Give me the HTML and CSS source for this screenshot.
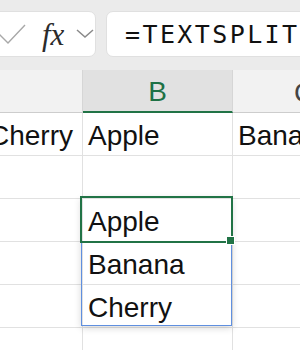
FILE: index.html
```html
<!DOCTYPE html>
<html lang="en">
<head>
    <meta charset="UTF-8" />
    <title>Sheet</title>
    <link rel="stylesheet" href="styles.css">
</head>
<body>
    <div class="toolbar">
        <div class="name-box">
            <svg class="check" width="36" height="24" viewBox="0 0 36 24">
                <polyline points="7,11 17,21 34,3" fill="none" stroke="#a8a8a8" stroke-width="1.4" />
            </svg>
            <span class="fx">fx</span>
            <svg class="chevron" width="18" height="10" viewBox="0 0 18 10">
                <polyline points="1,1 9,8 17,1" fill="none" stroke="#8a8a8a" stroke-width="1.5" />
            </svg>
        </div>
        <div class="formula">=TEXTSPLIT(A1,",")</div>
    </div>

    <div class="sheet">
        <div class="cell head"></div>
        <div class="cell head active-col">B</div>
        <div class="cell head">C</div>

        <div class="cell col-a">Cherry</div>
        <div class="cell">Apple</div>
        <div class="cell">Banana</div>

        <div class="cell"></div>
        <div class="cell"></div>
        <div class="cell"></div>

        <div class="cell"></div>
        <div class="cell current">
            Apple
            <div class="spill"></div>
            <div class="selection"></div>
            <div class="handle"></div>
        </div>
        <div class="cell"></div>

        <div class="cell"></div>
        <div class="cell">Banana</div>
        <div class="cell"></div>

        <div class="cell"></div>
        <div class="cell">Cherry</div>
        <div class="cell"></div>

        <div class="cell"></div>
        <div class="cell"></div>
        <div class="cell"></div>
    </div>
</body>
</html>
```

FILE: styles.css
```css
body {
    margin: 0;
    padding: 0;
    width: 300px;
    height: 350px;
    overflow: hidden;
    background-color: #ffffff;
    font-family: "Liberation Sans", Arial, sans-serif;
}

.toolbar {
    height: 70px;
    box-sizing: border-box;
    padding-top: 11px;
    background-color: #ebebeb;
    display: flex;
    align-items: flex-start;
    gap: 10px;
}

.name-box {
    margin-left: -10px;
    width: 106px;
    height: 46px;
    box-sizing: border-box;
    background-color: white;
    border: 1px solid #e0e0e0;
    border-radius: 7px;
    display: flex;
    align-items: center;
}

    .name-box .fx {
        margin-left: 15px;
        font-family: "Liberation Serif", "Times New Roman", serif;
        font-style: italic;
        font-size: 31px;
        line-height: 1;
        color: #2b2b2b;
    }

    .name-box .chevron {
        margin-left: auto;
        margin-right: 1px;
    }

.formula {
    flex: 1;
    margin-right: -20px;
    height: 46px;
    box-sizing: border-box;
    background-color: white;
    border: 1px solid #e0e0e0;
    border-radius: 7px;
    padding-left: 18px;
    display: flex;
    align-items: center;
    overflow: hidden;
    white-space: nowrap;
    font-family: "DejaVu Sans Mono", monospace;
    font-size: 25px;
    letter-spacing: 2.4px;
    color: #111;
}

.sheet {
    margin-left: -107px;
    width: 483px;
    display: grid;
    grid-template-columns: 190px 150px 143px;
    grid-auto-rows: 43px;
}

.cell {
    box-sizing: border-box;
    border-right: 1px solid #e1e1e1;
    border-bottom: 1px solid #e1e1e1;
    padding: 0 5px 5px 5px;
    display: flex;
    align-items: flex-end;
    white-space: nowrap;
    font-size: 28px;
    line-height: 1;
    color: #111;
}

    .cell.head {
        background-color: #f2f2f2;
        border-right-color: #d6d6d6;
        border-bottom-color: #cdcdcd;
        justify-content: center;
        color: #444;
    }

    .cell.active-col {
        background-color: #e1e1e1;
        border-bottom: 2px solid #217346;
        color: #1e7145;
    }

    .cell.col-a {
        justify-content: flex-end;
        padding-right: 9px;
    }

    .cell.current {
        position: relative;
    }

.spill {
    position: absolute;
    left: -2px;
    top: -2px;
    width: 151px;
    height: 129px;
    box-sizing: border-box;
    border: 1px solid #5f8fdf;
    box-shadow: 0 2px 7px rgba(0,0,0,0.16);
}

.selection {
    position: absolute;
    left: -3px;
    top: -3px;
    width: 153px;
    height: 47px;
    box-sizing: border-box;
    border: 2px solid #217346;
}

.handle {
    position: absolute;
    left: 144px;
    top: 38px;
    width: 7px;
    height: 7px;
    background-color: #217346;
    box-shadow: 0 0 0 1px white;
}
```
